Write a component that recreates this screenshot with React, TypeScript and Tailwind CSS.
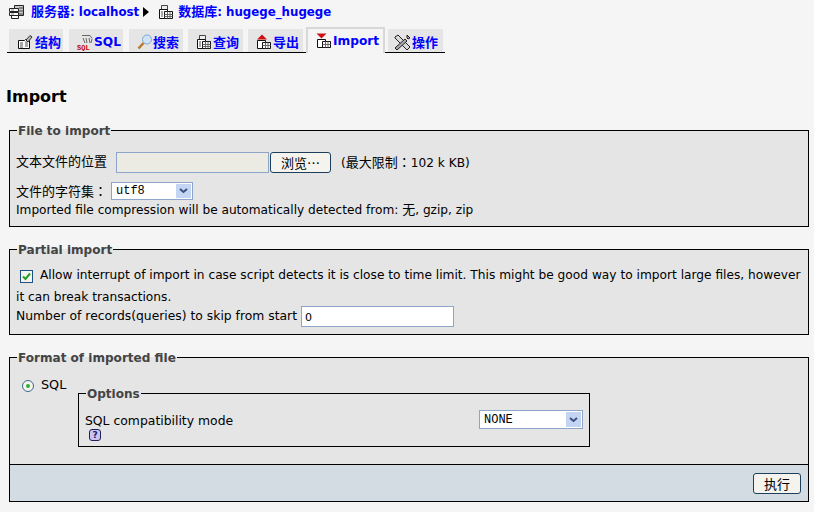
import React from "react";

const Doc = () => (
  <svg width="16" height="16" viewBox="0 0 16 16" className="shrink-0">
    <path d="M3.5 1.5h6v4h-6z" fill="#eee" stroke="#444" />
    <path d="M1.5 5.5h8v9h-8z" fill="#fff" stroke="#111" />
    <path d="M6.5 7.5h8v7h-8z" fill="#fff" stroke="#111" />
    <path d="M6.5 10.5h8M6.5 12.5h8M9.5 7.5v7M12 7.5v7" stroke="#666" />
    <path d="M3 8h2M3 10h2M3 12h2" stroke="#555" />
  </svg>
);
const Server = () => (
  <svg width="17" height="16" viewBox="0 0 17 16" className="shrink-0">
    <path d="M6.5 1.5h9v10h-9z" fill="#c8c8c8" stroke="#222" />
    <path d="M1.5 4.5h9v3h-9zM1.5 8.5h9v3h-9zM3.5 11.5h7v3h-7z" fill="#fff" stroke="#222" />
    <path d="M11 4h4M11 7h4M11 10h4" stroke="#444" />
    <path d="M3 6h3M3 10h3" stroke="#888" />
  </svg>
);
const Struct = () => (
  <svg width="17" height="16" viewBox="0 0 17 16" className="shrink-0">
    <path d="M1.5 6.5h6l1-1h4v9h-11z" fill="#fff" stroke="#111" />
    <path d="M3 9h3M3 11h3M3 13h3M8 8h3M8 10h3M8 12h3" stroke="#555" />
    <path d="M9 6l4-4.5 2 1.500-4 5z" fill="#bbb" stroke="#333" />
  </svg>
);
const SqlIcon = () => (
  <svg width="16" height="17" viewBox="0 0 16 17" className="shrink-0">
    <path d="M5 1.500h8l2 3M6 4l2 5M9 4l1 5M12 4l1 5M15 5l-1 4" stroke="#666" fill="none" />
    <text x="0" y="16" fontSize="7" fontWeight="700" fill="#c00000" fontFamily="'Liberation Mono', monospace">SQL</text>
  </svg>
);
const Search = () => (
  <svg width="15" height="16" viewBox="0 0 15 16" className="shrink-0">
    <circle cx="10" cy="5.500" r="4.500" fill="#cfe4fb" stroke="#7fa7cf" />
    <path d="M6.500 9L1.500 14.500" stroke="#b57a2c" strokeWidth="2.500" />
  </svg>
);
const Export = () => (
  <svg width="16" height="16" viewBox="0 0 16 16" className="shrink-0">
    <path d="M1.500 6.500h8v8h-8z" fill="#fff" stroke="#111" />
    <path d="M6.500 8.500h8v6h-8z" fill="#fff" stroke="#111" />
    <path d="M6.500 11.500h8M9.500 8.500v6M12 8.500v6" stroke="#666" />
    <path d="M6 0.500l5 5H1z" fill="#d01010" />
  </svg>
);
const ImportI = () => (
  <svg width="15" height="16" viewBox="0 0 15 16" className="shrink-0">
    <path d="M1.500 6.500h8v8h-8z" fill="#fff" stroke="#111" />
    <path d="M6.500 8.500h8v6h-8z" fill="#fff" stroke="#111" />
    <path d="M6.500 11.500h8M9.500 8.500v6M12 8.500v6" stroke="#666" />
    <path d="M0.500 0.500h10l-5 5z" fill="#d01010" />
  </svg>
);
const Tools = () => (
  <svg width="17" height="17" viewBox="0 0 17 17" className="shrink-0 -ml-[2px]">
    <path d="M1 3l3-2 12 12-3 3L1 4z" fill="#d8d8d8" stroke="#222" />
    <path d="M13 1l3 3-2 1-1-1zM11 5L1 14l2 2 10-9z" fill="#aaa" stroke="#222" />
  </svg>
);

const Tab = ({ icon, label, w, active, latin }: { icon: React.ReactNode; label: string; w: string; active?: boolean; latin?: boolean }) => (
  <div
    className={
      active
        ? `${w} h-[26px] flex items-start pt-[4px] pl-[8px] gap-[2px] border-2 border-b-0 border-[#d8d8d8] bg-[#f5f5f5]`
        : `${w} h-[24px] flex items-start pt-[5px] pl-[8px] gap-[1px] bg-[#e5e5e5] border-b border-black`
    }
  >
    {icon}
    <span className={`${latin ? "text-[12.2px]" : "text-[13px]"} font-bold text-[#0000ff] leading-[17px]`}>{label}</span>
  </div>
);

const Gap = ({ w }: { w: string }) => <div className={`${w} h-[24px] border-b border-black`} />;

const Select = ({ value, w, h }: { value: string; w: string; h: string }) => (
  <div className={`${w} ${h} flex items-center bg-white border border-[#8ca5c8] p-px`}>
    <span className="flex-1 pl-[3px] text-[12px] leading-none text-black font-['Liberation_Mono',monospace]">{value}</span>
    <span className="w-[15px] self-stretch bg-[#c3d5f3] flex items-center justify-center">
      <svg width="9" height="6" viewBox="0 0 9 6"><path d="M1 1l3.500 3L8 1" fill="none" stroke="#3a5080" strokeWidth="2" /></svg>
    </span>
  </div>
);

const Legend = ({ children, ml = "ml-px" }: { children: React.ReactNode; ml?: string }) => (
  <legend className={`${ml} pl-px pr-px h-[16px] pt-[2px] font-bold text-[12.05px] leading-[15px] text-[#444]`}>{children}</legend>
);

const Btn = ({ children, w, h }: { children: React.ReactNode; w: string; h: string }) => (
  <div className={`${w} ${h} flex items-center justify-center rounded-[3px] border border-[#1c3f5e] bg-[#f4f3ee] text-[13px] leading-none text-black font-['Noto_Sans_CJK_SC',sans-serif]`}>
    {children}
  </div>
);

const Cjk = ({ children }: { children: React.ReactNode }) => <span className="text-[13px]">{children}</span>;
const Colon = () => <span className="text-[13px] font-['Noto_Sans_CJK_TC',sans-serif]">：</span>;

export default function App() {
  return (
    <div className="w-[814px] h-[512px] overflow-hidden bg-[#f5f5f5] text-[12.15px] text-black font-['DejaVu_Sans','Noto_Sans_CJK_SC',sans-serif]">
      <div className="h-[24px] pl-[8px] flex items-center font-bold text-[11.8px] text-[#0000ff]">
        <Server />
        <span className="ml-[6px]"><Cjk>服务器</Cjk>: localhost</span>
        <svg width="7" height="10" viewBox="0 0 7 10" className="ml-[4px]"><path d="M0 0l6 5-6 5z" fill="#000" /></svg>
        <span className="ml-[8px]"><Doc /></span>
        <span className="ml-[4px]"><Cjk>数据库</Cjk>: hugege_hugege</span>
      </div>

      <div className="mt-[3px] ml-[7px] w-[438px] flex items-end h-[26px]">
        <Gap w="w-[2px]" />
        <Tab w="w-[54px]" icon={<Struct />} label="结构" />
        <Gap w="w-[6px]" />
        <Tab w="w-[54px]" icon={<SqlIcon />} label="SQL" latin />
        <Gap w="w-[6px]" />
        <Tab w="w-[54px]" icon={<Search />} label="搜索" />
        <Gap w="w-[5px]" />
        <Tab w="w-[55px]" icon={<Doc />} label="查询" />
        <Gap w="w-[5px]" />
        <Tab w="w-[55px]" icon={<Export />} label="导出" />
        <Gap w="w-[3px]" />
        <Tab w="w-[79px]" active icon={<ImportI />} label="Import" latin />
        <Gap w="w-[3px]" />
        <Tab w="w-[55px]" icon={<Tools />} label="操作" />
        <Gap w="w-[2px]" />
      </div>

      <h1 className="ml-[6px] mt-[35px] h-[18px] text-[16px] leading-[18px] font-bold text-black">Import</h1>

      <fieldset className="ml-[9px] w-[800px] mt-[16px] border border-black bg-[#e5e5e5] px-[6px] pb-[7px]">
        <Legend>File to import</Legend>
        <div className="flex items-center h-[21px] mt-[14px]">
          <span className="w-[100px] text-[13px] leading-[19px] pb-[2px]">文本文件的位置</span>
          <div className="w-[153px] h-[21px] bg-[#ebebe4] border border-[#8ca5c8]" />
          <Btn w="w-[61px] ml-px" h="h-[21px]">浏览…</Btn>
          <span className="ml-[10px]">(<Cjk>最大限制</Cjk><Colon />102 k KB)</span>
        </div>
        <div className="flex items-center h-[18px] mt-[9px]">
          <span className="w-[95px] text-[13px]">文件的字符集<Colon /></span>
          <Select value="utf8" w="w-[82px]" h="h-[18px]" />
        </div>
        <div className="leading-[18px] mt-px">Imported file compression will be automatically detected from: <Cjk>无</Cjk>, gzip, zip</div>
      </fieldset>

      <fieldset className="ml-[9px] w-[800px] mt-[14px] border border-black bg-[#e5e5e5] px-[6px] pb-[7px]">
        <Legend>Partial import</Legend>
        <div className="leading-[22px] mt-[7px] text-[12.19px]">
          <span className="inline-flex items-center justify-center w-[13px] h-[13px] border border-[#1c5180] bg-[#f4f4ee] align-[-2px] ml-[4px] mr-[7px]">
            <svg width="9" height="9" viewBox="0 0 9 9"><path d="M1 4.500l2.500 2.500L8 1.500" fill="none" stroke="#21a121" strokeWidth="2" /></svg>
          </span>
          Allow interrupt of import in case script detects it is close to time limit. This might be good way to import large files, however it can break transactions.
        </div>
        <div className="flex items-center -mt-[2px] h-[21px]">
          <span className="w-[281px] whitespace-nowrap text-[12.35px]">Number of records(queries) to skip from start</span>
          <div className="ml-[4px] w-[153px] h-[21px] bg-white border border-[#8ca5c8] pl-[3px] text-[11px] leading-[21px]">0</div>
        </div>
      </fieldset>

      <fieldset className="ml-[9px] w-[800px] mt-[14px] border border-black bg-[#e5e5e5]">
        <Legend ml="ml-[7px]">Format of imported file</Legend>
        <div className="h-[100px] flex items-start pl-[11px] pt-[10px] border-b border-black">
          <svg width="14" height="14" viewBox="0 0 14 14" className="mt-[4px] shrink-0">
            <circle cx="7" cy="7" r="5.500" fill="#f4f4ee" stroke="#3a6a8c" />
            <circle cx="7" cy="7" r="2" fill="#2fae2f" />
          </svg>
          <span className="ml-[6px] w-[26px] mt-px leading-[18px] text-[12.8px]">SQL</span>
          <fieldset className="ml-[11px] mt-[10px] w-[512px] border border-black px-[6px] pb-[5px]">
            <Legend>Options</Legend>
            <div className="flex items-start">
              <div className="w-[394px] pt-[11px]">
                <div className="leading-[17px] text-[12.4px]">SQL compatibility mode</div>
                <div className="w-[12px] h-[12px] ml-[4px] rounded-[3px] border border-[#222060] bg-[#c8c4ee] text-[9px] leading-[10px] text-center font-bold text-[#222060]">?</div>
              </div>
              <div className="mt-[9px]"><Select value="NONE" w="w-[104px]" h="h-[19px]" /></div>
            </div>
          </fieldset>
        </div>
        <div className="h-[36px] bg-[#d3dce3] flex items-center justify-end pr-[7px]">
          <Btn w="w-[48px]" h="h-[21px]">执行</Btn>
        </div>
      </fieldset>
    </div>
  );
}
